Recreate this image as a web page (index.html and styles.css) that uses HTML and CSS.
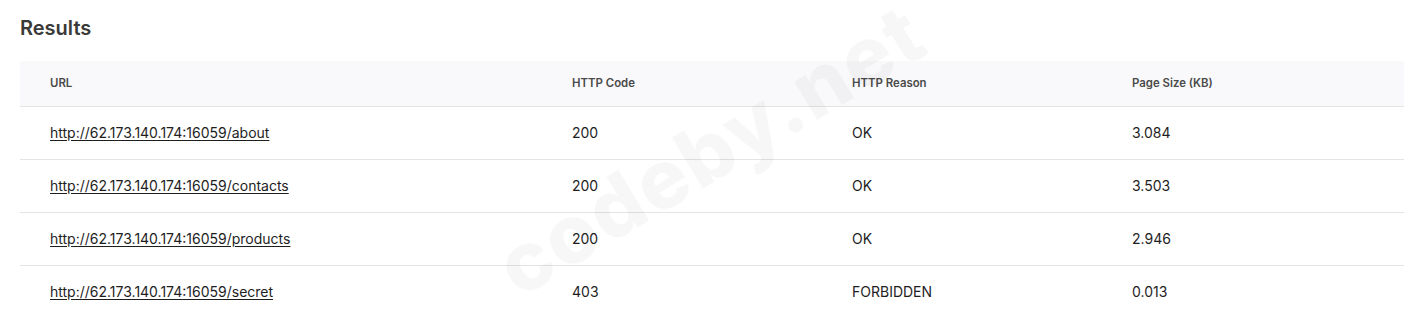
FILE: index.html
```html
<!DOCTYPE html>
<html lang="en">
<head>
<meta charset="utf-8">
<title>Results</title>
<link rel="stylesheet" href="styles.css">
</head>
<body>
<main class="page">
  <h2 class="title">Results</h2>
  <table class="results">
    <thead>
      <tr>
        <th class="c-url">URL</th>
        <th class="c-code">HTTP Code</th>
        <th class="c-reason">HTTP Reason</th>
        <th class="c-size">Page Size (KB)</th>
      </tr>
    </thead>
    <tbody>
      <tr>
        <td><a href="#">http://62.173.140.174:16059/about</a></td>
        <td>200</td>
        <td>OK</td>
        <td>3.084</td>
      </tr>
      <tr>
        <td><a href="#">http://62.173.140.174:16059/contacts</a></td>
        <td>200</td>
        <td>OK</td>
        <td>3.503</td>
      </tr>
      <tr>
        <td><a href="#">http://62.173.140.174:16059/products</a></td>
        <td>200</td>
        <td>OK</td>
        <td>2.946</td>
      </tr>
      <tr>
        <td><a href="#">http://62.173.140.174:16059/secret</a></td>
        <td>403</td>
        <td>FORBIDDEN</td>
        <td>0.013</td>
      </tr>
    </tbody>
  </table>
  <div class="watermark">codeby.net</div>
</main>
</body>
</html>
```
FILE: styles.css
```css
html, body {
  margin: 0;
  padding: 0;
  background: #ffffff;
}
body {
  font-family: Inter, "Noto Sans", Arial, sans-serif;
  color: #1f1f1f;
  overflow: hidden;
}
.page {
  position: relative;
  padding: 0 20px;
  height: 311px;
  overflow: hidden;
}
.title {
  margin: 0;
  padding-top: 16px;
  height: 61px;
  box-sizing: border-box;
  font-size: 20px;
  line-height: 24px;
  font-weight: 600;
  color: #3a3a38;
}
.results {
  width: 1384px;
  border-collapse: collapse;
  table-layout: fixed;
}
.c-url { width: 522px; }
.c-code { width: 280px; }
.c-reason { width: 280px; }
.c-size { width: 302px; }
.results th {
  text-align: left;
  font-size: 11.4px;
  font-weight: 600;
  color: #4a4a4a;
  background: #f9f9fb;
  height: 45px;
  padding: 0 30px;
  border-bottom: 1px solid #e4e4e7;
  box-sizing: border-box;
}
.results td {
  height: 53px;
  padding: 0 30px;
  font-size: 14px;
  color: #1e1e1e;
  border-bottom: 1px solid #e4e4e7;
  box-sizing: border-box;
}
.results td a {
  color: #1e1e1e;
  text-decoration: underline;
  text-underline-offset: 2px;
}
.watermark {
  position: absolute;
  left: 470px;
  top: 100px;
  font-size: 82px;
  font-weight: 800;
  color: rgba(0, 0, 0, 0.03);
  transform: rotate(-31deg);
  transform-origin: center;
  pointer-events: none;
  white-space: nowrap;
  letter-spacing: 2px;
}
```
